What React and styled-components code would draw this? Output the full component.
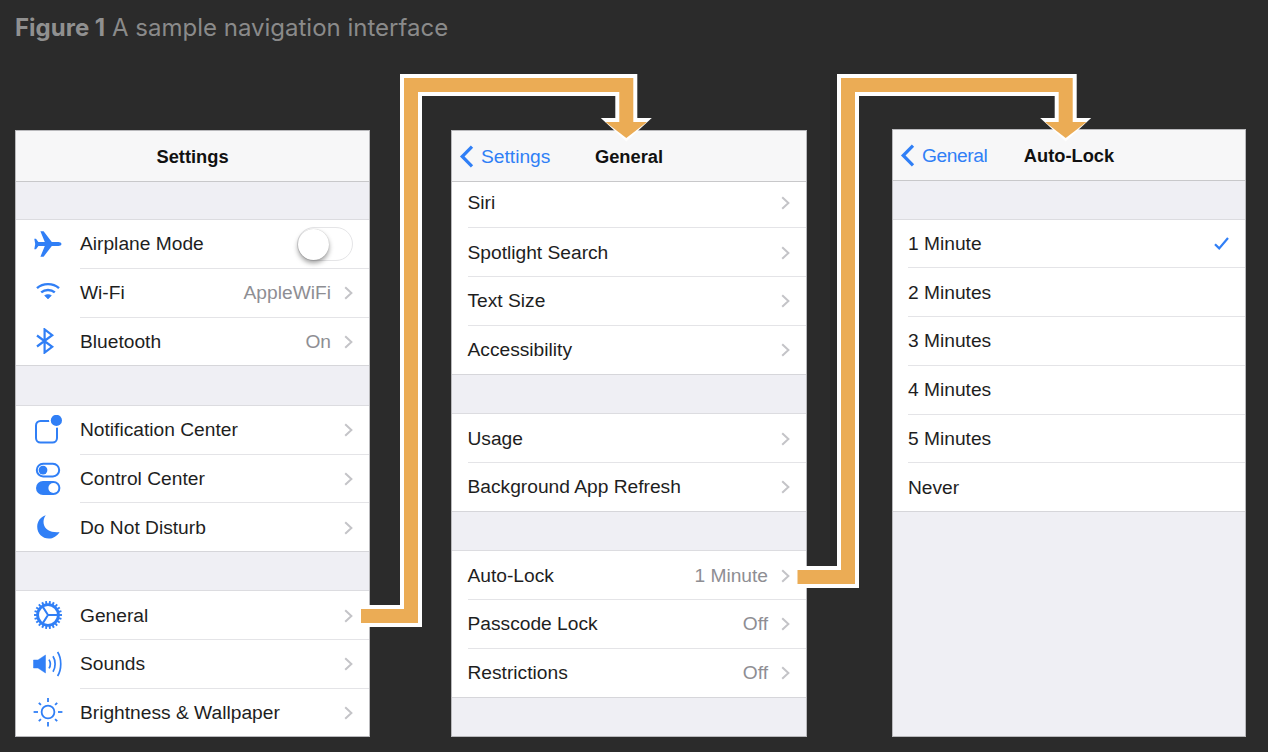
import styled, { createGlobalStyle } from 'styled-components';

const BLUE = '#307ff6';

const GlobalStyle = createGlobalStyle`
	html, body {
		margin: 0;
		padding: 0;
		background: #2b2b2b;
	}
`;

const Page = styled.div`
	position: relative;
	width: 1268px;
	height: 752px;
	overflow: hidden;
	background: #2b2b2b;
	font-family: 'Liberation Sans', Arial, sans-serif;
`;

const Title = styled.div`
	height: 130px;
	box-sizing: border-box;
	padding: 13px 0 0 15px;
	font-family: Inter, 'Liberation Sans', sans-serif;
	font-size: 24px;
	line-height: 29px;
	color: #8a8a8a;
	& > b {
		font-weight: 700;
		color: #909090;
	}
`;

const Columns = styled.div`
	display: flex;
	padding-left: 15px;
	align-items: flex-start;
`;

const Panel = styled.div`
	width: ${(p) => p.$width}px;
	height: ${(p) => p.$height || 607}px;
	margin-right: ${(p) => p.$gap || 0}px;
	margin-top: ${(p) => p.$lift || 0}px;
	box-sizing: border-box;
	border: 1px solid #b9b9bc;
	background: #efeff4;
	overflow: hidden;
	flex-shrink: 0;
`;

const Nav = styled.div`
	display: grid;
	grid-template-columns: 1fr auto 1fr;
	align-items: center;
	height: 51px;
	box-sizing: border-box;
	padding-top: 2px;
	border-bottom: 1px solid #c8c8ca;
	background: #f7f7f8;
`;

const NavTitle = styled.div`
	grid-column: 2;
	font-size: 18.3px;
	font-weight: 700;
	color: #111;
`;

const Back = styled.div`
	display: flex;
	align-items: center;
	gap: 7px;
	padding-left: 7px;
	font-size: 19.2px;
	letter-spacing: ${(p) => p.$tracking || 0}px;
	color: ${BLUE};
	& > svg {
		margin-top: -2px;
	}
`;

const Section = styled.div`
	margin-top: ${(p) => p.$gap || 0}px;
	border-top: ${(p) => (p.$gap ? '1px solid #dcdce0' : 'none')};
	background: #fff;
`;

const Row = styled.div`
	display: flex;
	align-items: stretch;
	height: ${(p) => p.$height || 48.8}px;
	box-sizing: border-box;
	padding-left: ${(p) => p.$inset}px;
	background: #fff;
	&:last-child {
		border-bottom: 1px solid #d6d6da;
	}
`;

const IconSlot = styled.div`
	display: flex;
	align-items: center;
	justify-content: center;
	width: 64px;
	margin-left: -${(p) => p.$inset}px;
	flex-shrink: 0;
`;

const RowBody = styled.div`
	flex: 1;
	display: flex;
	align-items: center;
	box-sizing: border-box;
	padding: ${(p) => (p.$raise ? 0 : 1)}px 16px ${(p) => p.$raise || 0}px 0;
	border-bottom: 1px solid #e4e4e7;
	${Row}:last-child & {
		border-bottom: none;
	}
`;

const Label = styled.div`
	flex: 1;
	font-size: 19.2px;
	color: #1e1e1e;
`;

const Value = styled.div`
	margin-right: 13px;
	font-size: 19.2px;
	color: #8e8e93;
`;

const Toggle = styled.div`
	display: flex;
	align-items: center;
	width: 56px;
	height: 34px;
	box-sizing: border-box;
	border: 1.5px solid #e5e5e7;
	border-radius: 17px;
	background: #fff;
`;

const Knob = styled.div`
	width: 31px;
	height: 31px;
	border-radius: 50%;
	background: #fff;
	box-shadow: 0 3px 5px rgba(0, 0, 0, 0.38), 0 0 1px rgba(0, 0, 0, 0.25);
`;

const FlowLayer = styled.svg`
	position: absolute;
	top: 0;
	left: 0;
	pointer-events: none;
`;

const Chevron = () => (
	<svg width="9" height="14" viewBox="0 0 9 14" fill="none">
		<path d="M1.2 1.2 L7.4 7 L1.2 12.8" stroke="#c4c4c8" strokeWidth="2" />
	</svg>
);

const BackChevron = () => (
	<svg width="15" height="23" viewBox="0 0 15 23" fill="none">
		<path d="M13 1.6 L3.2 11.5 L13 21.4" stroke={BLUE} strokeWidth="3.2" />
	</svg>
);

const Check = () => (
	<svg width="15" height="13" viewBox="0 0 15 13" fill="none">
		<path d="M1 7.2 L5.2 11.4 L14 1" stroke={BLUE} strokeWidth="2.2" />
	</svg>
);

const Plane = () => (
	<svg width="28" height="26" viewBox="0 0 28 26" fill={BLUE}>
		<path d="M27.5 13 C27.5 11.7 26 11 24.4 11 L17.8 11 L9.6 0.3 L6.4 0.3 L10.8 11 L4.4 11 L2 7.8 L0.3 7.8 L1.2 13 L0.3 18.2 L2 18.2 L4.4 15 L10.8 15 L6.4 25.7 L9.6 25.7 L17.8 15 L24.4 15 C26 15 27.5 14.3 27.5 13 Z" />
	</svg>
);

const Wifi = () => (
	<svg width="24" height="22" viewBox="0 0 24 22" fill="none" stroke={BLUE} strokeWidth="2.4">
		<path d="M1 6.2 C7 0.8 17 0.8 23 6.2" />
		<path d="M5.2 10.4 C9 7.2 15 7.2 18.8 10.4" />
		<path d="M8.6 13.6 L12 17 L15.4 13.6 C13.6 12.2 10.4 12.2 8.6 13.6 Z" fill={BLUE} strokeWidth="0.6" />
	</svg>
);

const Bluetooth = () => (
	<svg width="26" height="26" viewBox="0 0 26 26" fill="none" stroke={BLUE} strokeWidth="2.2">
		<path d="M2 7.5 L17.2 18.8 L9.6 24.6 L9.6 1.4 L17.2 7.2 L2 18.5" />
	</svg>
);

const Notifications = () => (
	<svg width="30" height="30" viewBox="0 0 30 30" fill="none">
		<rect x="3" y="6" width="21" height="21.5" rx="4.5" stroke={BLUE} strokeWidth="2" />
		<circle cx="23.4" cy="5.4" r="7.4" fill="#fff" />
		<circle cx="23.4" cy="5.4" r="5.6" fill={BLUE} />
	</svg>
);

const Switches = () => (
	<svg width="26" height="34" viewBox="0 0 26 34" fill="none">
		<rect x="1.8" y="1.8" width="22.4" height="12.6" rx="6.3" stroke={BLUE} strokeWidth="2" />
		<circle cx="8" cy="8.1" r="4.4" fill={BLUE} />
		<rect x="1" y="19" width="24.4" height="14" rx="7" fill={BLUE} />
		<circle cx="18.4" cy="26" r="5" fill="#fff" />
	</svg>
);

const Moon = () => (
	<svg width="23" height="24" viewBox="0 0 23 24" fill={BLUE}>
		<path d="M8.8 0.3 C3.4 1.8 0.2 6.5 0.2 11.8 C0.2 18.4 5.4 23.6 11.8 23.6 C16.2 23.6 20.2 21 22.6 17 C15 18 7.4 15 6.6 8.2 C6.3 5.2 7 2.6 8.8 0.3 Z" />
	</svg>
);

const gearTeeth = Array.from({ length: 22 }, (_, i) => (i * 360) / 22);

const Gear = () => (
	<svg width="30" height="30" viewBox="-15 -14 30 30" fill="none" stroke={BLUE}>
		<circle r="10.4" strokeWidth="2.8" />
		{gearTeeth.map((deg) => (
			<line key={deg} x1="11" x2="14" strokeWidth="1.9" transform={`rotate(${deg})`} />
		))}
		<path d="M0 0 L10 0 M0 0 L-5.5 -8.6 M0 0 L-5.5 8.6" strokeWidth="2" />
	</svg>
);

const Speaker = () => (
	<svg width="30" height="26" viewBox="0 0 30 26" fill="none" stroke={BLUE}>
		<path d="M0.5 9 L5 9 L12.5 4 L12.5 22 L5 17 L0.5 17 Z" fill={BLUE} strokeWidth="0.5" />
		<path d="M16 8.6 C17.6 11.2 17.6 14.8 16 17.4" strokeWidth="1.7" />
		<path d="M20 5.2 C22.8 9.6 22.8 16.4 20 20.8" strokeWidth="1.7" />
		<path d="M24.6 1 C28.8 7.6 28.8 18.4 24.6 25" strokeWidth="1.7" />
	</svg>
);

const sunRays = [0, 45, 90, 135, 180, 225, 270, 315];

const Sun = () => (
	<svg width="30" height="30" viewBox="-15 -14 30 30" fill="none" stroke={BLUE} strokeWidth="1.8">
		<circle r="6.4" />
		{sunRays.map((deg) => (
			<line key={deg} x1="10" x2={deg % 90 ? 13 : 14.4} transform={`rotate(${deg})`} />
		))}
	</svg>
);

const FlowArrow = ({ line, head, headInner }) => (
	<>
		<polyline points={line} fill="none" stroke="#fff" strokeWidth="22" strokeLinejoin="miter" />
		<polygon points={head} fill="#fff" />
		<polyline points={line} fill="none" stroke="#ebac55" strokeWidth="14" strokeLinejoin="miter" />
		<polygon points={headInner} fill="#ebac55" />
	</>
);

const rootSections = [
	{
		gap: 37,
		rows: [
			{ icon: <Plane />, label: 'Airplane Mode', toggle: true },
			{ icon: <Wifi />, label: 'Wi-Fi', value: 'AppleWiFi' },
			{ icon: <Bluetooth />, label: 'Bluetooth', value: 'On' },
		],
	},
	{
		gap: 38.5,
		rows: [
			{ icon: <Notifications />, label: 'Notification Center' },
			{ icon: <Switches />, label: 'Control Center' },
			{ icon: <Moon />, label: 'Do Not Disturb' },
		],
	},
	{
		gap: 38,
		rows: [
			{ icon: <Gear />, label: 'General' },
			{ icon: <Speaker />, label: 'Sounds' },
			{ icon: <Sun />, label: 'Brightness & Wallpaper' },
		],
	},
];

const generalSections = [
	{
		gap: 0,
		rows: [
			{ label: 'Siri', height: 46.25, raise: 4 },
			{ label: 'Spotlight Search' },
			{ label: 'Text Size' },
			{ label: 'Accessibility' },
		],
	},
	{
		gap: 38.5,
		rows: [{ label: 'Usage' }, { label: 'Background App Refresh' }],
	},
	{
		gap: 38.5,
		rows: [
			{ label: 'Auto-Lock', value: '1 Minute' },
			{ label: 'Passcode Lock', value: 'Off' },
			{ label: 'Restrictions', value: 'Off' },
		],
	},
];

const lockSections = [
	{
		gap: 37.5,
		rows: [
			{ label: '1 Minute', checked: true },
			{ label: '2 Minutes', plain: true },
			{ label: '3 Minutes', plain: true },
			{ label: '4 Minutes', plain: true },
			{ label: '5 Minutes', plain: true },
			{ label: 'Never', plain: true },
		],
	},
];

const Sections = ({ sections, inset }) =>
	sections.map((section) => (
		<Section key={section.rows[0].label} $gap={section.gap}>
			{section.rows.map((row) => (
				<Row key={row.label} $inset={inset} $height={row.height}>
					{row.icon && <IconSlot $inset={inset}>{row.icon}</IconSlot>}
					<RowBody $raise={row.raise}>
						<Label>{row.label}</Label>
						{row.value && <Value>{row.value}</Value>}
						{row.toggle && (
							<Toggle>
								<Knob />
							</Toggle>
						)}
						{row.checked && <Check />}
						{!row.toggle && !row.checked && !row.plain && <Chevron />}
					</RowBody>
				</Row>
			))}
		</Section>
	));

export default function App() {
	return (
		<Page>
			<GlobalStyle />
			<Title>
				<b>Figure 1</b> A sample navigation interface
			</Title>
			<Columns>
				<Panel $width={355} $gap={81}>
					<Nav>
						<NavTitle>Settings</NavTitle>
					</Nav>
					<Sections sections={rootSections} inset={65} />
				</Panel>
				<Panel $width={356} $gap={85}>
					<Nav>
						<Back>
							<BackChevron />
							Settings
						</Back>
						<NavTitle>General</NavTitle>
					</Nav>
					<Sections sections={generalSections} inset={15.5} />
				</Panel>
				<Panel $width={354} $height={608} $lift={-1}>
					<Nav>
						<Back $tracking={-0.4}>
							<BackChevron />
							General
						</Back>
						<NavTitle>Auto-Lock</NavTitle>
					</Nav>
					<Sections sections={lockSections} inset={15} />
				</Panel>
			</Columns>
			<FlowLayer width="1268" height="752" viewBox="0 0 1268 752">
				<FlowArrow
					line="361,616 411,616 411,85 626.3,85 626.3,124"
					head="600.8,118 651.8,118 626.3,141.5"
					headInner="605.5,122 647,122 626.3,138"
				/>
				<FlowArrow
					line="797.5,577 848,577 848,85 1065.7,85 1065.7,124"
					head="1040.2,118 1091.2,118 1065.7,141.5"
					headInner="1045,122 1086.5,122 1065.7,138"
				/>
			</FlowLayer>
		</Page>
	);
}
